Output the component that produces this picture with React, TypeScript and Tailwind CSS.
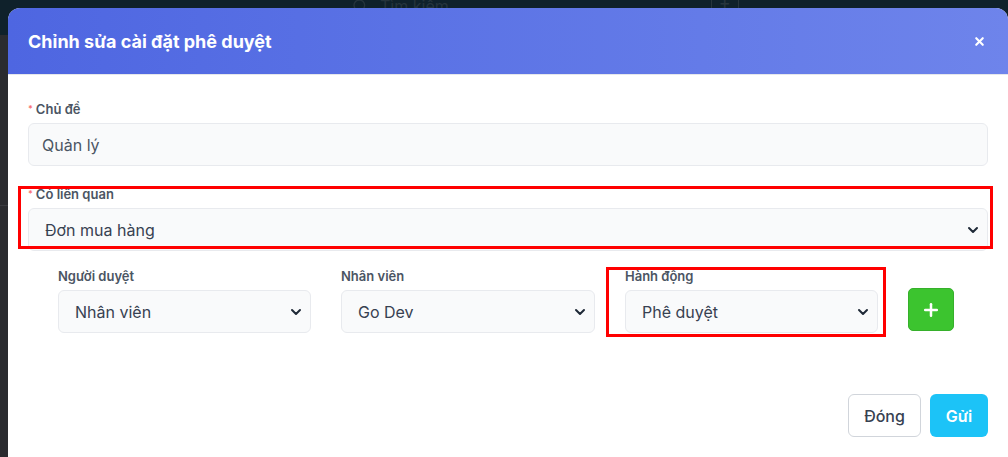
import React from "react";
import { ChevronDown, Plus, X, Search } from "lucide-react";

const font = { fontFamily: "Inter, 'Noto Sans', sans-serif" };

function Label({ text, required }: { text: string; required?: boolean }) {
  return (
    <div className="flex items-center h-4 mb-[6px] text-[13px] font-semibold text-[#4b5563] leading-4">
      {required && <span className="text-[#f87171] text-[9px] mr-[3px]">*</span>}
      {text}
    </div>
  );
}

function Select({ value }: { value: string }) {
  return (
    <div className="flex items-center justify-between h-[43px] pl-4 pr-[6px] rounded-md border border-[#e8eaee] bg-[#f9fafb] text-[16px] text-[#374151]">
      <span>{value}</span>
      <ChevronDown size={16} strokeWidth={3} className="text-[#1f2937]" />
    </div>
  );
}

export default function App() {
  return (
    <div className="relative w-[1008px] h-[457px] overflow-hidden bg-[#2a2b2f]" style={font}>
      {/* backdrop */}
      <div className="h-[35px] bg-[#0f212b] flex items-start">
        <div className="ml-[352px] -mt-[6px] flex items-center gap-3 text-[#25343d]">
          <Search size={16} />
          <span className="text-[16px]">Tìm kiếm</span>
        </div>
        <div className="ml-[262px] h-[8px] w-[28px] border-x border-[#27353d] flex justify-center">
          <span className="text-[#27353d] text-[18px] leading-none -mt-[6px]">+</span>
        </div>
      </div>
      <div className="h-px bg-[#3a3b40] mt-[170px] w-2" />

      {/* modal */}
      <div className="absolute left-2 top-2 w-[1000px] h-[462px] rounded-xl bg-white overflow-hidden">
        <div className="h-[67px] flex items-center justify-between pl-5 pr-[22px] bg-gradient-to-r from-[#4e66e1] to-[#6e84eb] border-b border-[#e5e7eb]">
          <h2 className="text-[18px] font-bold text-white">Chỉnh sửa cài đặt phê duyệt</h2>
          <X size={13} strokeWidth={4} className="text-white" />
        </div>

        <div className="px-5 pt-[26px]">
          <Label text="Chủ đề" required />
          <div className="flex items-center h-[43px] pl-[13px] rounded-md border border-[#e8eaee] bg-[#f9fafb] text-[16px] text-[#4b5563]">
            Quản lý
          </div>

          <div className="mt-5">
            <Label text="Có liên quan" required />
            <Select value="Đơn mua hàng" />
          </div>

          <div className="mt-[17px] px-[30px] grid grid-cols-[253px_254px_253px_46px] gap-x-[30px] items-start">
            <div>
              <Label text="Người duyệt" />
              <Select value="Nhân viên" />
            </div>
            <div>
              <Label text="Nhân viên" />
              <Select value="Go Dev" />
            </div>
            <div>
              <Label text="Hành động" />
              <Select value="Phê duyệt" />
            </div>
            <button className="mt-5 h-[43px] w-[46px] rounded-[5px] bg-[#3cc42f] border border-[#36b02b] flex items-center justify-center text-white">
              <Plus size={20} strokeWidth={3} />
            </button>
          </div>

          <div className="mt-[61px] flex justify-end gap-[9px]">
            <button className="h-[43px] w-[73px] rounded-md border border-[#d1d5db] bg-white text-[16px] font-medium text-[#374151]">
              Đóng
            </button>
            <button className="h-[43px] w-[58px] rounded-md bg-[#1cc3f7] text-[16px] font-semibold text-white">
              Gửi
            </button>
          </div>
        </div>
      </div>

      {/* annotation boxes */}
      <div className="absolute left-[18px] top-[186px] w-[975px] h-[63px] border-[3px] border-[#ff0000]" />
      <div className="absolute left-[606px] top-[267px] w-[280px] h-[70px] border-[3px] border-[#ff0000]" />
    </div>
  );
}
